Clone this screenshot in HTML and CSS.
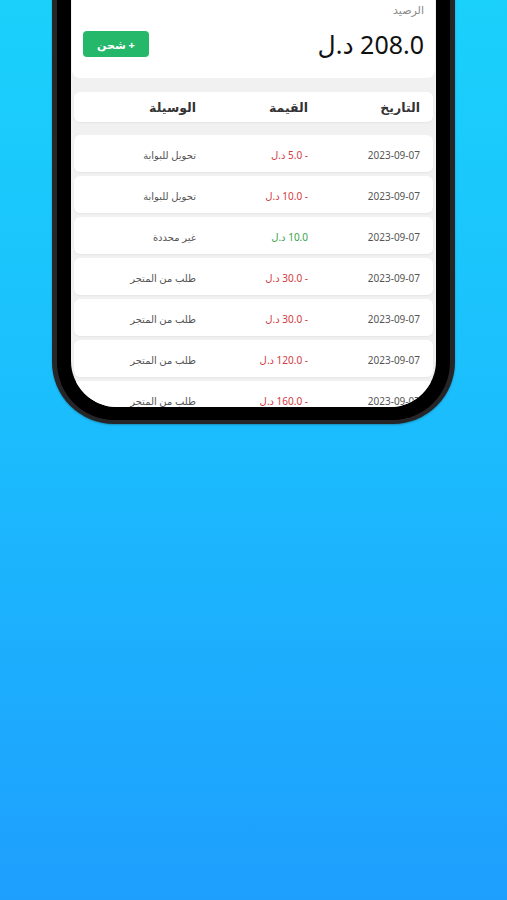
FILE: index.html
```html
<!DOCTYPE html>
<html lang="ar" dir="rtl">
<head>
    <meta charset="UTF-8">
    <meta name="viewport" content="width=device-width, initial-scale=1.0">
    <title>المحفظة</title>
    <link rel="stylesheet" href="styles.css">
</head>
<body>
    <div class="phone">
        <div class="screen">
            <div class="balance">
                <div class="balance-label">الرصيد</div>
                <div class="balance-row">
                    <div class="balance-amount">208.0 د.ل</div>
                    <button class="charge-btn">+ شحن</button>
                </div>
            </div>

            <div class="card head">
                <div>التاريخ</div>
                <div>القيمة</div>
                <div>الوسيلة</div>
            </div>

            <div class="rows">
                <div class="card row">
                    <div class="date">2023-09-07</div>
                    <div class="value minus">- 5.0 د.ل</div>
                    <div class="method">تحويل للبوابة</div>
                </div>
                <div class="card row">
                    <div class="date">2023-09-07</div>
                    <div class="value minus">- 10.0 د.ل</div>
                    <div class="method">تحويل للبوابة</div>
                </div>
                <div class="card row">
                    <div class="date">2023-09-07</div>
                    <div class="value plus">10.0 د.ل</div>
                    <div class="method">غير محددة</div>
                </div>
                <div class="card row">
                    <div class="date">2023-09-07</div>
                    <div class="value minus">- 30.0 د.ل</div>
                    <div class="method">طلب من المتجر</div>
                </div>
                <div class="card row">
                    <div class="date">2023-09-07</div>
                    <div class="value minus">- 30.0 د.ل</div>
                    <div class="method">طلب من المتجر</div>
                </div>
                <div class="card row">
                    <div class="date">2023-09-07</div>
                    <div class="value minus">- 120.0 د.ل</div>
                    <div class="method">طلب من المتجر</div>
                </div>
                <div class="card row">
                    <div class="date">2023-09-07</div>
                    <div class="value minus">- 160.0 د.ل</div>
                    <div class="method">طلب من المتجر</div>
                </div>
            </div>
        </div>
    </div>
</body>
</html>
```

FILE: styles.css
```css
html, body {
    margin: 0;
    padding: 0;
}
body {
    height: 900px;
    overflow: hidden;
    font-family: 'Noto Sans', 'DejaVu Sans', sans-serif;
    background: linear-gradient(180deg, #1ad1fb 0%, #1bbefd 45%, #1e9ffe 100%);
}
.phone {
    width: 365px;
    margin: -60px auto 0 52px;
    padding: 0 14px 13px;
    background: #000;
    border: 5px solid #262628;
    border-top: none;
    border-bottom-width: 4px;
    border-radius: 0 0 62px 62px;
    box-shadow: 0 1px 2px rgba(0, 0, 0, 0.25);
}
.screen {
    height: 467px;
    padding-top: 60px;
    box-sizing: border-box;
    background: #f1f1f1;
    border-radius: 0 0 46px 46px;
    overflow: hidden;
}
.balance {
    height: 78px;
    box-sizing: border-box;
    padding: 2px 11px 0;
    background: #fff;
    border-radius: 0 0 8px 8px;
    margin: 0 1px;
}
.balance-label {
    font-size: 11px;
    line-height: 16px;
    color: #8a8a8a;
}
.balance-row {
    display: flex;
    justify-content: space-between;
    align-items: center;
    margin-top: 13px;
    height: 26px;
}
.balance-amount {
    font-size: 25px;
    color: #111;
    line-height: 26px;
}
.charge-btn {
    width: 66px;
    height: 26px;
    border: none;
    border-radius: 4px;
    background: #25b86a;
    color: #fff;
    font-family: inherit;
    font-size: 11px;
    font-weight: bold;
    padding: 0;
}
.card {
    display: grid;
    grid-template-columns: 112px 112px 112px;
    align-items: center;
    padding-right: 13px;
    background: #fff;
    margin: 0 3px;
    border-radius: 6px;
    box-shadow: 0 1px 2px rgba(0, 0, 0, 0.05);
}
.head {
    margin-top: 14px;
    height: 30px;
    font-size: 12.5px;
    font-weight: bold;
    color: #333;
}
.rows {
    display: flex;
    flex-direction: column;
    gap: 4px;
    margin-top: 13px;
}
.row {
    height: 37px;
    padding-top: 3px;
    box-sizing: border-box;
    font-size: 10px;
    color: #555;
}
.minus {
    color: #d23a3f;
}
.plus {
    color: #3aa34c;
}
```
